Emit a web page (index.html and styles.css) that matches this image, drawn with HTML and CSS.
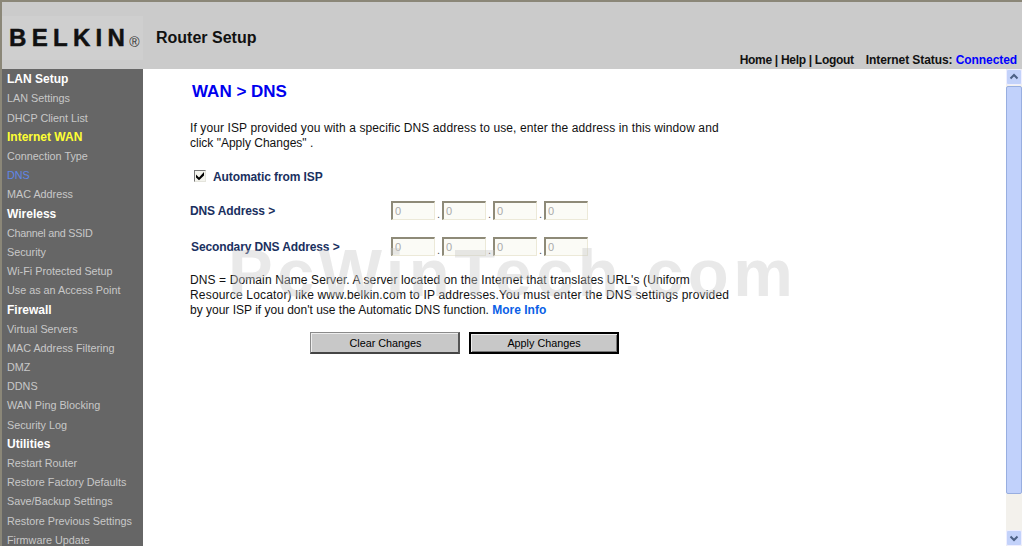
FILE: index.html
```html
<!DOCTYPE html>
<html lang="en">
<head>
<meta charset="utf-8">
<title>Router Setup</title>
<link rel="stylesheet" href="styles.css">
</head>
<body>
<header class="top">
  <div class="logo"><span class="logo-word">BELKIN</span><span class="logo-reg">®</span></div>
  <div class="title">Router Setup</div>
  <div class="status"><span class="links">Home | Help | Logout</span><span class="inet">Internet Status: <span class="conn">Connected</span></span></div>
</header>
<div class="body">
  <nav class="side">
    <div class="sec">LAN Setup</div>
    <a class="item">LAN Settings</a>
    <a class="item">DHCP Client List</a>
    <div class="sec cur">Internet WAN</div>
    <a class="item">Connection Type</a>
    <a class="item act">DNS</a>
    <a class="item">MAC Address</a>
    <div class="sec">Wireless</div>
    <a class="item tight">Channel and SSID</a>
    <a class="item">Security</a>
    <a class="item">Wi-Fi Protected Setup</a>
    <a class="item">Use as an Access Point</a>
    <div class="sec">Firewall</div>
    <a class="item">Virtual Servers</a>
    <a class="item">MAC Address Filtering</a>
    <a class="item">DMZ</a>
    <a class="item">DDNS</a>
    <a class="item">WAN Ping Blocking</a>
    <a class="item">Security Log</a>
    <div class="sec">Utilities</div>
    <a class="item">Restart Router</a>
    <a class="item">Restore Factory Defaults</a>
    <a class="item">Save/Backup Settings</a>
    <a class="item">Restore Previous Settings</a>
    <a class="item">Firmware Update</a>
  </nav>
  <main class="main">
    <h1 class="head">WAN &gt; DNS</h1>
    <p class="para intro"><span class="ls1">If your ISP provided you with a specific DNS address to use, enter the address in this window and</span><br>click "Apply Changes" .</p>
    <label class="auto"><span class="check"><svg viewBox="0 0 10 10" width="10" height="10"><path d="M1 3.5l3 3L9 1v3.6L4 9.2 1 6.4z" fill="#000"/></svg></span>Automatic from ISP</label>
    <div class="row row-first">
      <span class="lab">DNS Address &gt;</span>
      <span class="ip"><input class="oct" value="0" disabled><i>.</i><input class="oct" value="0" disabled><i>.</i><input class="oct" value="0" disabled><i>.</i><input class="oct" value="0" disabled></span>
    </div>
    <div class="row row-second">
      <span class="lab lab2">Secondary DNS Address &gt;</span>
      <span class="ip"><input class="oct" value="0" disabled><i>.</i><input class="oct" value="0" disabled><i>.</i><input class="oct" value="0" disabled><i>.</i><input class="oct" value="0" disabled></span>
    </div>
    <p class="para desc"><span class="ls1">DNS = Domain Name Server. A server located on the Internet that translates URL's (Uniform</span><br><span class="ls2">Resource Locator) like www.belkin.com to IP addresses.You must enter the DNS settings provided</span><br>by your ISP if you don't use the Automatic DNS function. <span class="more">More Info</span></p>
    <div class="btns">
      <button class="btn" type="button">Clear Changes</button>
      <button class="btn btn-def" type="button">Apply Changes</button>
    </div>
  </main>
  <div class="sbar">
    <div class="sb-btn"><svg viewBox="0 0 16 16" width="16" height="16"><path d="M4.5 9.5L8 6l3.5 3.5" fill="none" stroke="#4d6185" stroke-width="2"/></svg></div>
    <div class="sb-thumb"></div>
    <div class="sb-track"></div>
    <div class="sb-btn"><svg viewBox="0 0 16 16" width="16" height="16"><path d="M4.5 6.5L8 10l3.5-3.5" fill="none" stroke="#4d6185" stroke-width="2"/></svg></div>
  </div>
  <div class="mark">PcWinTech.com</div>
</div>
</body>
</html>
```
FILE: styles.css
```css
html, body { margin: 0; padding: 0; height: 100%; overflow: hidden; }
body { font-family: "Liberation Sans", Arial, sans-serif; font-size: 12px; color: #000; background: #fff; display: flex; flex-direction: column; height: 546px; }
.top { height: 67px; flex: none; background: #cbcbcb; border-top: 2px solid #8b8778; border-left: 2px solid #8b8778; display: flex; position: relative; }
.logo { width: 141px; height: 44px; margin-top: 14px; background: #cfcfcf; display: flex; align-items: center; padding-left: 7px; box-sizing: border-box; }
.logo-word { font-size: 24px; font-weight: bold; letter-spacing: 5.3px; color: #111; -webkit-text-stroke: .5px #111; }
.logo-reg { font-size: 14px; line-height: 14px; color: #333; margin-left: -1px; margin-top: 8px; }
.title { font-size: 16px; font-weight: bold; margin-left: 13px; margin-top: 26px; line-height: 20px; color: #111; }
.status { position: absolute; right: 5px; bottom: 1px; font-size: 12px; font-weight: bold; line-height: 15px; display: flex; gap: 12px; color: #111; }
.links { letter-spacing: -.3px; }
.inet { letter-spacing: -.08px; }
.conn { color: #0000ff; }
.body { flex: 1; display: flex; position: relative; min-height: 0; }
.side { flex: none; background: #666; border-left: 2px solid #8b8778; padding-top: 1.3px; overflow: hidden; font-size: 10.8px; padding-left: 5px; width: 136px; }
.sec { height: 19.2px; line-height: 19.2px; font-size: 12px; font-weight: bold; color: #fff; white-space: nowrap; }
.sec.cur { color: #ffff33; }
.item { display: block; height: 19.2px; line-height: 19.2px; color: #c8c8c8; white-space: nowrap; }
.item.tight { letter-spacing: -.25px; }
.item.act { color: #5f86e8; }
.main { flex: 1; min-width: 0; padding-left: 47px; position: relative; }
.head { margin: 13px 0 0 2px; font-size: 17px; line-height: 20px; font-weight: bold; color: #0000ee; }
.para { margin: 0; font-size: 12px; line-height: 15px; color: #111; }
.ls1 { letter-spacing: .11px; }
.ls2 { letter-spacing: .18px; }
.intro { margin-top: 19px; }
.auto { display: flex; align-items: center; margin: 18px 0 0 4px; height: 15px; font-weight: bold; color: #1a3060; letter-spacing: -.1px; }
.check { width: 10px; height: 10px; margin: -1px 7px 0 0; border-style: solid; border-width: 1px; border-color: #777 #e4e4dc #e4e4dc #777; background: #f4f4ee; display: flex; }
.row { display: flex; align-items: center; height: 21px; }
.row-first { margin-top: 16px; }
.row-second { margin-top: 15px; }
.lab { width: 201px; font-weight: bold; color: #1a3060; white-space: nowrap; letter-spacing: -.12px; }
.lab2 { padding-left: 1px; width: 200px; }
.ip { display: flex; align-items: flex-end; }
.ip i { width: 7px; text-align: center; font-style: normal; font-size: 11px; line-height: 12px; color: #555; }
.oct { width: 44px; height: 19px; box-sizing: border-box; padding: 0 2px; margin: 0; border-style: solid; border-color: #8e8a78 #ece9d8 #ece9d8 #8e8a78; background: #fbfbf6; color: #aaa; font: 11px "Liberation Sans", Arial, sans-serif; border-width: 2px 1px 1px 2px; }
.desc { margin-top: 16px; }
.more { color: #0b5fe6; font-weight: bold; }
.btns { display: flex; gap: 9px; margin: 14px 0 0 120px; }
.btn { width: 150px; height: 22px; padding: 0 0 0 2px; background: #c8c8c8; border-style: solid; border-width: 1px 2px 2px 1px; border-color: #8a8a8a #555 #444 #8a8a8a; box-shadow: inset 1px 1px 0 #eee; font: 10.8px "Liberation Sans", Arial, sans-serif; color: #000; }
.btn-def { padding: 0; border: 2px solid #000; box-shadow: inset 1px 1px 0 #eee, inset -1px -1px 0 #777; }
.sbar { width: 16px; flex: none; display: flex; flex-direction: column; background: #f3f1ec; }
.sb-btn { height: 16px; background: #c3d2fa; border-radius: 2px; border: 1px solid #eef; box-sizing: border-box; display: flex; align-items: center; justify-content: center; flex: none; }
.sb-btn svg { flex: none; }
.sb-thumb { height: 408px; margin-top: 1px; background: #c1d1fb; border: 1px solid #98aee0; border-radius: 2px; box-sizing: border-box; flex: none; }
.sb-track { flex: 1; }
.mark { position: absolute; left: 228px; top: 165px; font-size: 67px; line-height: 78px; letter-spacing: 4.4px; font-weight: bold; color: rgba(200,200,200,.4); white-space: nowrap; pointer-events: none; }
```
